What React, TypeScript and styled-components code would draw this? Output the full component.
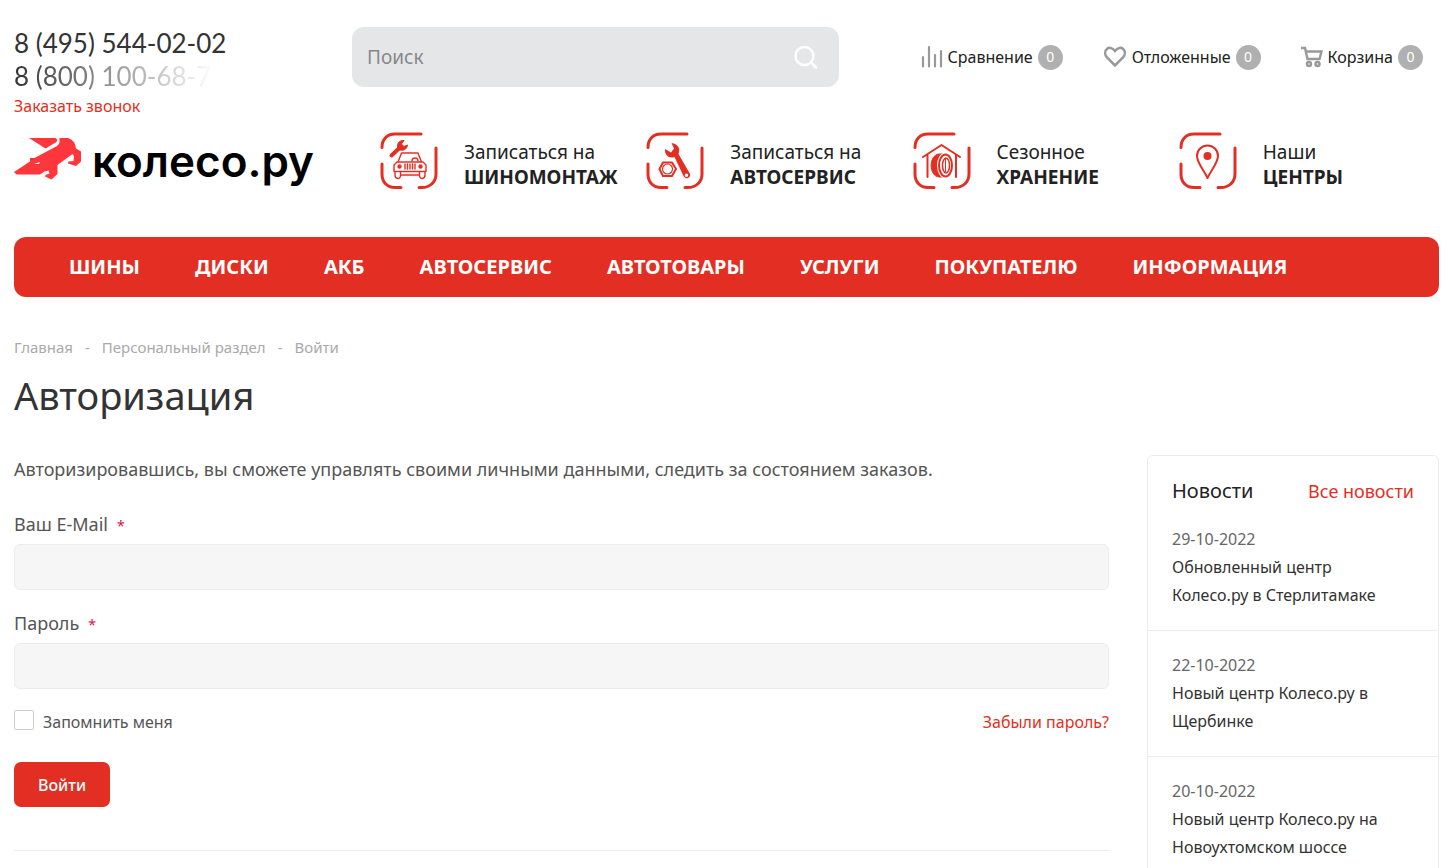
import React from "react";
import styled, { createGlobalStyle } from "styled-components";

const red = "#e32f23";

const Global = createGlobalStyle`
  *, *::before, *::after { box-sizing: border-box; }
  body { margin: 0; background: #fff; color: #333; font: 16px/28px "Noto Sans", "Open Sans", sans-serif; overflow-x: hidden; }
  a { color: inherit; text-decoration: none; }
  button, input { font: inherit; }
`;

const Page = styled.div`padding: 27px 9px 0 14px;`;

const TopBar = styled.header`
  display: grid;
  grid-template-columns: 338px 487px 1fr;
  align-items: start;
`;
const Phones = styled.div`display: flex; flex-direction: column; align-items: flex-start;`;
const Phone = styled.a<{ $fade?: boolean }>`
  font: 26px/33px Lato, sans-serif;
  white-space: nowrap;
  ${p => p.$fade && `
    background: linear-gradient(to right, #333 0, #fff 200px);
    background-clip: text;
    -webkit-background-clip: text;
    color: transparent;
  `}
`;
const CallLink = styled.a`color: ${red}; font-size: 16px; line-height: 26px;`;

const SearchForm = styled.form`
  display: flex;
  align-items: center;
  height: 60px;
  padding: 0 20px 0 15px;
  border-radius: 12px;
  background: #e5e6e8;
`;
const SearchInput = styled.input`
  flex: 1;
  min-width: 0;
  border: 0;
  padding: 0;
  background: none;
  font-size: 19px;
  &::placeholder { color: #888; opacity: 1; }
`;
const SearchButton = styled.button`
  display: flex;
  padding: 0;
  border: 0;
  background: none;
`;

const UserLinks = styled.nav`
  display: flex;
  justify-content: flex-end;
  align-items: center;
  gap: 40px;
  height: 60px;
  padding-right: 16px;
`;
const UserLink = styled.a`
  display: flex;
  align-items: center;
  gap: 5px;
  white-space: nowrap;
  color: #222;
  font-size: 16px;
`;
const Count = styled.span`
  display: flex;
  align-items: center;
  justify-content: center;
  width: 25px;
  height: 25px;
  border-radius: 50%;
  background: #b0b0b0;
  color: #fff;
  font-size: 14px;
`;

const BrandBar = styled.div`
  display: grid;
  grid-template-columns: 366px 1fr;
  align-items: center;
  margin-top: 10px;
  height: 64px;
`;
const Logo = styled.a`display: flex; align-items: center; gap: 10px;`;
const LogoText = styled.span`font: 600 44px/56px Inter, sans-serif; color: #000;`;
const Services = styled.nav`display: grid; grid-template-columns: repeat(4, 1fr); column-gap: 6px;`;
const Service = styled.a`display: flex; align-items: center; gap: 26px; color: #222;`;
const ServiceText = styled.span`
  display: flex;
  flex-direction: column;
  font-size: 19px;
  line-height: 25px;
  white-space: nowrap;
  padding-top: 8px;
`;

const MainMenu = styled.nav`
  display: flex;
  align-items: center;
  gap: 55px;
  height: 60px;
  margin-top: 44px;
  padding: 0 55px;
  border-radius: 12px;
  background: ${red};
`;
const MenuLink = styled.a`color: #fff; font-size: 20px; font-weight: 700; white-space: nowrap;`;

const Crumbs = styled.nav`
  display: flex;
  gap: 12px;
  margin-top: 36px;
  color: #aaa;
  font-size: 15px;
`;
const Title = styled.h1`margin: 8px 0 0; font-size: 38px; line-height: 52px; font-weight: 400;`;

const Columns = styled.div`
  display: grid;
  grid-template-columns: minmax(0, 1fr) 292px;
  gap: 38px;
  margin-top: 34px;
  align-items: start;
`;
const Main = styled.main`color: #555; font-size: 18px;`;
const Intro = styled.p`margin: 0;`;
const LoginForm = styled.form`margin-top: 27px;`;
const Field = styled.div`display: flex; flex-direction: column; margin-bottom: 19px;`;
const Label = styled.label`line-height: 28px; margin-bottom: 6px;`;
const Required = styled.span`color: #d9104a; margin-left: 9px; font-size: 14px; line-height: 1;`;
const TextInput = styled.input`
  width: 100%;
  height: 46px;
  padding: 0 14px;
  border: 1px solid #ececec;
  border-radius: 6px;
  background: #f6f6f6;
`;
const Options = styled.div`
  display: flex;
  justify-content: space-between;
  font-size: 16px;
`;
const Remember = styled.label`display: flex; align-items: flex-start; gap: 9px;`;
const Check = styled.input`
  appearance: none;
  width: 20px;
  height: 20px;
  margin: 2px 0 0;
  border: 1px solid #ccc;
  border-radius: 2px;
  background: #fff;
`;
const RedLink = styled.a`color: ${red};`;
const Submit = styled.button`
  height: 45px;
  margin-top: 26px;
  padding: 0 24px;
  border: 0;
  border-radius: 7px;
  background: ${red};
  color: #fff;
  font-size: 16px;
  font-weight: 500;
`;
const Divider = styled.hr`margin: 43px 0 0; border: 0; border-top: 1px solid #ececec;`;

const News = styled.aside`border: 1px solid #ececec; border-radius: 6px;`;
const NewsHead = styled.div`
  display: flex;
  justify-content: space-between;
  align-items: center;
  padding: 21px 24px 0;
  a { color: ${red}; font-size: 18px; }
`;
const NewsTitle = styled.h2`margin: 0; font-size: 20px; font-weight: 400; line-height: 28px; color: #222;`;
const NewsItem = styled.article`
  padding: 20px 24px 21px;
  font-size: 16px;
  & + & { border-top: 1px solid #ececec; }
`;
const NewsDate = styled.time`display: block; color: #666;`;
const NewsLink = styled.a`display: block; max-width: 228px;`;

const Frame = ({ children }: { children: React.ReactNode }) => (
  <svg width="58" height="58" viewBox="0 0 58 58" fill="none" stroke={red} strokeWidth="3" strokeLinecap="round" strokeLinejoin="round">
    <path d="M2 15.500C2 7.500 7 2 15 2H41M56 16V42C56 50 50 55.500 42 55.500H39M21 55.500H15C7 55.500 2 50 2 42V32" />
    {children}
  </svg>
);

const services = [
  {
    top: "Записаться на", bottom: "ШИНОМОНТАЖ",
    icon: (
      <>
        <path d="M11.500 23.500L20 15.500" strokeWidth="4" />
        <path d="M18 17.500C16 12 19 8 24 8.500L21.500 12L24 14.500L27.500 13C27 17.500 23 19.500 18 17.500Z" fill={red} strokeWidth="1" />
        <g strokeWidth="1.400">
          <path d="M18 30L21.500 21H38L41.500 30M17 30H43L46 33V39.500H14V33ZM15 39.500V43C15 47.500 20.500 47.500 20.500 43.500V39.500M39.500 39.500V43.500C39.500 47.500 45 47.500 45 43V39.500M20.500 43H39.500" />
          <path d="M32 29C32 25 38 25 38 29M25 32V37M27.500 32V37M30 32V37M32.500 32V37M35 32V37" />
          <circle cx="19.500" cy="34.500" r="1.500" fill={red} /><circle cx="40.500" cy="34.500" r="1.500" fill={red} />
        </g>
      </>
    ),
  },
  {
    top: "Записаться на", bottom: "АВТОСЕРВИС",
    icon: (
      <>
        <path d="M17 30.500H26L30 37L26 44H17L13.500 37Z" strokeWidth="2" />
        <circle cx="21.500" cy="37" r="5" strokeWidth="1.200" />
        <path fill={red} stroke="none" fillRule="evenodd" d="M25.500 11L28 16.500L25 20.500L19 17C18.500 23 23 27 28.500 25L37.500 44C40.500 49 46 45 43.500 41L32.500 22C35 16 31.500 12 25.500 11ZM40.500 41.500A1.700 1.700 0 1 0 40.500 45A1.700 1.700 0 1 0 40.500 41.500Z" />
      </>
    ),
  },
  {
    top: "Сезонное", bottom: "ХРАНЕНИЕ",
    icon: (
      <g strokeWidth="2">
        <path d="M10 25L28.500 13L47 25M14.500 23V45M43 23V45" />
        <path d="M32 22H26C15.500 23 15.500 44 26 45H32Z" fill={red} strokeWidth="1" />
        <ellipse cx="32.500" cy="33.500" rx="7" ry="11.500" fill="#fff" stroke="#fff" strokeWidth="3" />
        <ellipse cx="32.500" cy="33.500" rx="6.500" ry="11" />
        <ellipse cx="33" cy="33.500" rx="3.500" ry="7.500" strokeWidth="1.500" />
        <path d="M32.500 27V40" strokeWidth="1" />
      </g>
    ),
  },
  {
    top: "Наши", bottom: "ЦЕНТРЫ",
    icon: (
      <>
        <path d="M28.500 46C25 38 18 31 18 24A10.500 10.500 0 0 1 39 24C39 31 32 38 28.500 46Z" strokeWidth="2" />
        <circle cx="28.500" cy="24" r="4" fill={red} stroke="none" />
      </>
    ),
  },
];

const menu = ["ШИНЫ", "ДИСКИ", "АКБ", "АВТОСЕРВИС", "АВТОТОВАРЫ", "УСЛУГИ", "ПОКУПАТЕЛЮ", "ИНФОРМАЦИЯ"];

const news = [
  { date: "29-10-2022", title: "Обновленный центр Колесо.ру в Стерлитамаке" },
  { date: "22-10-2022", title: "Новый центр Колесо.ру в Щербинке" },
  { date: "20-10-2022", title: "Новый центр Колесо.ру на Новоухтомском шоссе" },
];

export default function App() {
  return (
    <>
      <Global />
      <Page>
        <TopBar>
          <Phones>
            <Phone href="#">8 (495) 544-02-02</Phone>
            <Phone href="#" $fade>8 (800) 100-68-7</Phone>
            <CallLink href="#">Заказать звонок</CallLink>
          </Phones>
          <SearchForm>
            <SearchInput placeholder="Поиск" aria-label="Поиск" />
            <SearchButton type="button" aria-label="Найти">
              <svg width="26" height="26" viewBox="0 0 26 26" fill="none" stroke="#fff" strokeWidth="2.500" strokeLinecap="round">
                <circle cx="11.500" cy="12" r="9" /><path d="M18.500 19L23 23.500" />
              </svg>
            </SearchButton>
          </SearchForm>
          <UserLinks>
            <UserLink href="#">
              <svg width="22" height="24" viewBox="0 0 22 24" fill="none" stroke="#999" strokeWidth="2.200" strokeLinecap="round"><path d="M2 12V21.500M8 2V21.500M14 10V21.500M20 6V21.500" /></svg>
              Сравнение <Count>0</Count>
            </UserLink>
            <UserLink href="#">
              <svg width="24" height="22" viewBox="0 0 24 22" fill="none" stroke="#999" strokeWidth="2.500"><path d="M12 19.500L4 11.500C-1.500 5 6.500 -2.500 12 5C17.500 -2.500 25.500 5 20 11.500Z" /></svg>
              Отложенные <Count>0</Count>
            </UserLink>
            <UserLink href="#">
              <svg width="22" height="22" viewBox="0 0 22 22" fill="none" stroke="#999" strokeWidth="2.400"><path d="M0 2H4L6.500 13H18.500L20.500 5.500H5" /><circle cx="8" cy="18" r="2" /><circle cx="16.500" cy="18" r="2" /></svg>
              Корзина <Count>0</Count>
            </UserLink>
          </UserLinks>
        </TopBar>

        <BrandBar>
          <Logo href="#">
            <svg width="68" height="48" viewBox="0 -1 68 48" fill="#ff363b">
              <path d="M15 0H41.500Q44 1 42.500 4L31.500 10.500Z" />
              <path fillRule="evenodd" d="M45.500 0H54Q61 2 62 10.500L67 13.500V23.500L62 28L54 25.500L54.500 23.500L59.500 23L60 18L58.500 16L43.500 27V36L37.500 41.500L31 38.500L31.500 37L35.500 35.500L34.500 32.500L30.500 33.500L26 36.500H2.500L0 34L16 23.500V20H20.500L43 8Q45.500 6.500 45.500 4ZM20 26L26 24L25 26Z" />
            </svg>
            <LogoText>колесо.ру</LogoText>
          </Logo>
          <Services>
            {services.map(s => (
              <Service href="#" key={s.bottom}>
                <Frame>{s.icon}</Frame>
                <ServiceText><span>{s.top}</span><b>{s.bottom}</b></ServiceText>
              </Service>
            ))}
          </Services>
        </BrandBar>

        <MainMenu>{menu.map(m => <MenuLink href="#" key={m}>{m}</MenuLink>)}</MainMenu>

        <Crumbs>
          <a href="#">Главная</a><span>-</span><a href="#">Персональный раздел</a><span>-</span><span>Войти</span>
        </Crumbs>
        <Title>Авторизация</Title>

        <Columns>
          <Main>
            <Intro>Авторизировавшись, вы сможете управлять своими личными данными, следить за состоянием заказов.</Intro>
            <LoginForm>
              <Field><Label htmlFor="email">Ваш E-Mail<Required>*</Required></Label><TextInput id="email" type="email" /></Field>
              <Field><Label htmlFor="password">Пароль<Required>*</Required></Label><TextInput id="password" type="password" /></Field>
              <Options>
                <Remember><Check type="checkbox" />Запомнить меня</Remember>
                <RedLink href="#">Забыли пароль?</RedLink>
              </Options>
              <Submit type="button">Войти</Submit>
            </LoginForm>
            <Divider />
          </Main>
          <News>
            <NewsHead><NewsTitle>Новости</NewsTitle><a href="#">Все новости</a></NewsHead>
            {news.map(n => (
              <NewsItem key={n.date}><NewsDate>{n.date}</NewsDate><NewsLink href="#">{n.title}</NewsLink></NewsItem>
            ))}
          </News>
        </Columns>
      </Page>
    </>
  );
}
